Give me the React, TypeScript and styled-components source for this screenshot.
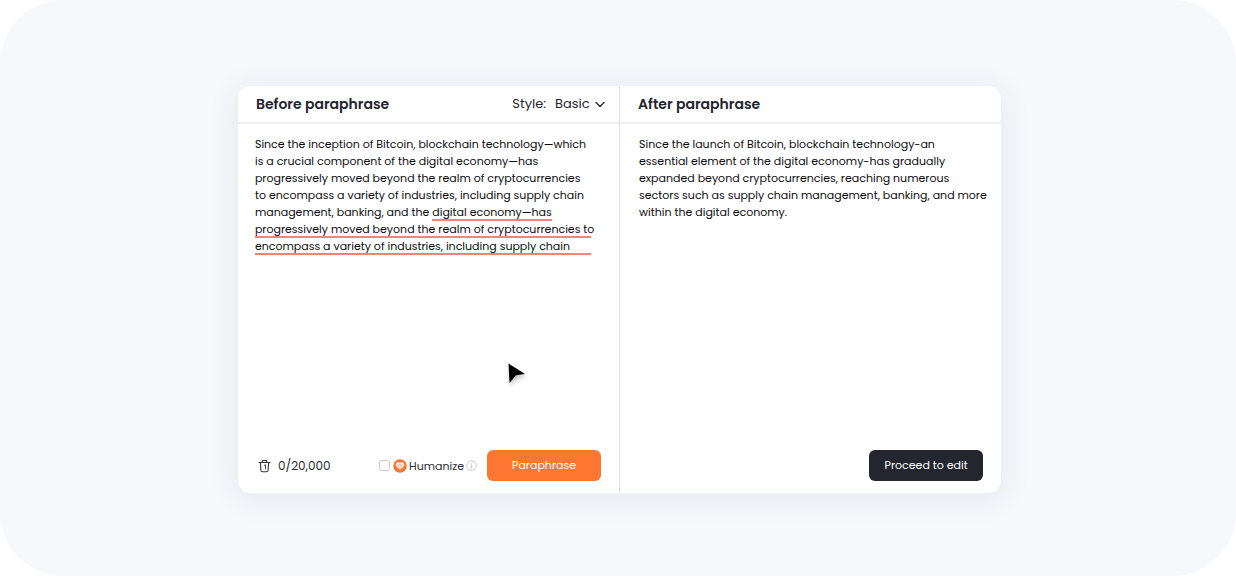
import React from "react";
import styled, { createGlobalStyle } from "styled-components";

const GlobalStyle = createGlobalStyle`
  *, *::before, *::after { box-sizing: border-box; }
  body {
    margin: 0;
    background: #fff;
    color: #101014;
    font-family: Poppins, Inter, "Open Sans", sans-serif;
  }
`;

const Stage = styled.main`
  display: flex;
  min-height: 100vh;
  padding: 86px 19% 83px 19.25%;
  border-radius: 64px;
  background: #f7f8fc;
`;

const Card = styled.div`
  flex: 1;
  display: grid;
  grid-template-columns: 381fr 382fr;
  border-radius: 13px;
  background: #fff;
  box-shadow: 0 4px 28px 6px rgba(40, 44, 80, 0.06);
`;

const Panel = styled.section`
  display: flex;
  flex-direction: column;
  min-width: 0;
  & + & { border-left: 1px solid #e2e2e5; }
`;

const PanelHeader = styled.header`
  display: flex;
  align-items: center;
  justify-content: space-between;
  height: 38px;
  padding: 0 14px 0 18px;
  border-bottom: 2px solid #efeff1;
`;

const Title = styled.h2`
  margin: 0;
  font-size: 14px;
  line-height: 20px;
  font-weight: 600;
  color: #23252f;
`;

const StyleField = styled.label`
  display: flex;
  align-items: center;
  gap: 9px;
  font-size: 13px;
  line-height: 20px;
  color: #23252f;
`;

const SelectWrap = styled.span`
  display: flex;
  align-items: center;
  gap: 5px;
`;

const StyleSelect = styled.select`
  appearance: none;
  padding: 0;
  border: 0;
  background: transparent;
  font: inherit;
  color: inherit;
`;

const Copy = styled.p<{ $inset: number }>`
  flex: 1;
  margin: 0;
  padding: 12px 12px 12px ${(p) => p.$inset}px;
  font-size: 11px;
  line-height: 17px;
  color: #0c0c10;
  white-space: nowrap;
`;

const Line = styled.span`
  display: block;
  height: 17px;
`;

const Marked = styled.span<{ $full?: boolean }>`
  display: inline-block;
  width: ${(p) => (p.$full ? "calc(100% - 16px)" : "auto")};
  height: 17px;
  vertical-align: top;
  box-shadow: inset 0 -2px #fb8080;
`;

const Footer = styled.footer<{ $end?: boolean }>`
  display: flex;
  align-items: center;
  justify-content: ${(p) => (p.$end ? "flex-end" : "space-between")};
  padding: 0 18px 12px 20px;
`;

const Group = styled.div<{ $gap: number }>`
  display: flex;
  align-items: center;
  gap: ${(p) => p.$gap}px;
`;

const IconButton = styled.button`
  display: flex;
  padding: 0;
  border: 0;
  background: transparent;
  color: #33343a;
`;

const Count = styled.span`
  font-size: 12px;
  line-height: 18px;
  color: #2c2d33;
`;

const HumanizeLabel = styled.label`
  display: flex;
  align-items: center;
  gap: 2px;
  font-size: 11px;
  line-height: 18px;
  color: #2c2d33;
`;

const Checkbox = styled.input`
  appearance: none;
  width: 11px;
  height: 11px;
  margin: 0 1px 0 0;
  border: 1px solid #c9c9cd;
  border-radius: 3px;
  background: #fff;
`;

const Button = styled.button<{ $tone: "accent" | "dark" }>`
  width: 114px;
  height: 31px;
  padding: 0 0 2px;
  border: 0;
  border-radius: 6px;
  background: ${(p) => (p.$tone === "accent" ? "#ff7733" : "#23252f")};
  color: #fff;
  font-family: inherit;
  font-size: 11px;
  font-weight: 400;
  line-height: 18px;
`;

const Pointer = styled.svg`
  position: absolute;
  left: 502px;
  top: 357px;
  filter: drop-shadow(1px 3px 2px rgba(0, 0, 0, 0.25));
`;

const Chevron = () => (
  <svg width="10" height="7" viewBox="0 0 10 7" fill="none" stroke="#23252f" strokeWidth="1.3" strokeLinecap="round" strokeLinejoin="round" aria-hidden="true">
    <path d="M1 1.5 5 5.5 9 1.5" />
  </svg>
);

const Trash = () => (
  <svg width="13" height="14" viewBox="0 0 13 14" fill="none" stroke="currentColor" strokeWidth="1.1" strokeLinecap="round" strokeLinejoin="round" aria-hidden="true">
    <path d="M1 3.5h11M4 3.3 4.6 1.5h3.8L9 3.3M2.4 3.7l.5 7.6c.1 1 .6 1.5 1.5 1.5h4.2c.9 0 1.4-.5 1.5-1.5l.5-7.6" />
    <path d="M7.5 6v4M6.300 6.300h1" strokeWidth="0.9" />
  </svg>
);

const HumanizeMark = () => (
  <svg width="14" height="14" viewBox="0 0 14 14" aria-hidden="true">
    <circle cx="7" cy="7" r="6.7" fill="#ff7433" />
    <path d="M7 11.2 6.3 9.5 4.5 9 4.3 7.8 3 7.2 2.8 5.2 4 3.6 5.8 3.3 7 4 8.2 3.3 10 3.6 11.2 5.2 11 7.2 9.7 7.8 9.5 9 7.7 9.5Z" fill="#fff" />
    <path d="M6 4.5v4M8 4.5v4M4.2 5.5l.8.6v1.2M9.8 5.5l-.8.6v1.2" fill="none" stroke="#ff7433" strokeWidth="0.6" />
  </svg>
);

const Info = () => (
  <svg width="11" height="11" viewBox="0 0 11 11" fill="none" stroke="#bdbdc2" strokeWidth="0.8" aria-hidden="true">
    <circle cx="5.5" cy="5.5" r="4.8" />
    <path d="M4.7 4.8h.9v3M4.6 7.9h2M5.5 2.7v.9" />
  </svg>
);

const beforeLines = [
  "Since the inception of Bitcoin, blockchain technology—which",
  "is a crucial component of the digital economy—has",
  "progressively moved beyond the realm of cryptocurrencies",
  "to encompass a variety of industries, including supply chain",
];

const afterLines = [
  "Since the launch of Bitcoin, blockchain technology-an",
  "essential element of the digital economy-has gradually",
  "expanded beyond cryptocurrencies, reaching numerous",
  "sectors such as supply chain management, banking, and more",
  "within the digital economy.",
];

export default function App() {
  return (
    <>
      <GlobalStyle />
      <Stage>
        <Card>
          <Panel>
            <PanelHeader>
              <Title>Before paraphrase</Title>
              <StyleField>
                Style:
                <SelectWrap>
                  <StyleSelect defaultValue="Basic">
                    <option>Basic</option>
                  </StyleSelect>
                  <Chevron />
                </SelectWrap>
              </StyleField>
            </PanelHeader>
            <Copy $inset={17}>
              {beforeLines.map((line) => (
                <Line key={line}>{line}</Line>
              ))}
              <Line>
                management, banking, and the <Marked>digital economy—has</Marked>
              </Line>
              <Line>
                <Marked $full>progressively moved beyond the realm of cryptocurrencies to</Marked>
              </Line>
              <Line>
                <Marked $full>encompass a variety of industries, including supply chain</Marked>
              </Line>
            </Copy>
            <Footer>
              <Group $gap={7}>
                <IconButton type="button" aria-label="Clear text">
                  <Trash />
                </IconButton>
                <Count>0/20,000</Count>
              </Group>
              <Group $gap={10}>
                <Group $gap={2}>
                  <HumanizeLabel>
                    <Checkbox type="checkbox" />
                    <HumanizeMark />
                    Humanize
                  </HumanizeLabel>
                  <Info />
                </Group>
                <Button type="button" $tone="accent">Paraphrase</Button>
              </Group>
            </Footer>
          </Panel>
          <Panel>
            <PanelHeader>
              <Title>After paraphrase</Title>
            </PanelHeader>
            <Copy $inset={19}>
              {afterLines.map((line) => (
                <Line key={line}>{line}</Line>
              ))}
            </Copy>
            <Footer $end>
              <Button type="button" $tone="dark">Proceed to edit</Button>
            </Footer>
          </Panel>
        </Card>
      </Stage>
      <Pointer width="28" height="32" viewBox="0 0 28 32" aria-hidden="true">
        <path d="M6.5 6.5 23 17 14 18.3 7.5 26Z" fill="#000" />
      </Pointer>
    </>
  );
}
